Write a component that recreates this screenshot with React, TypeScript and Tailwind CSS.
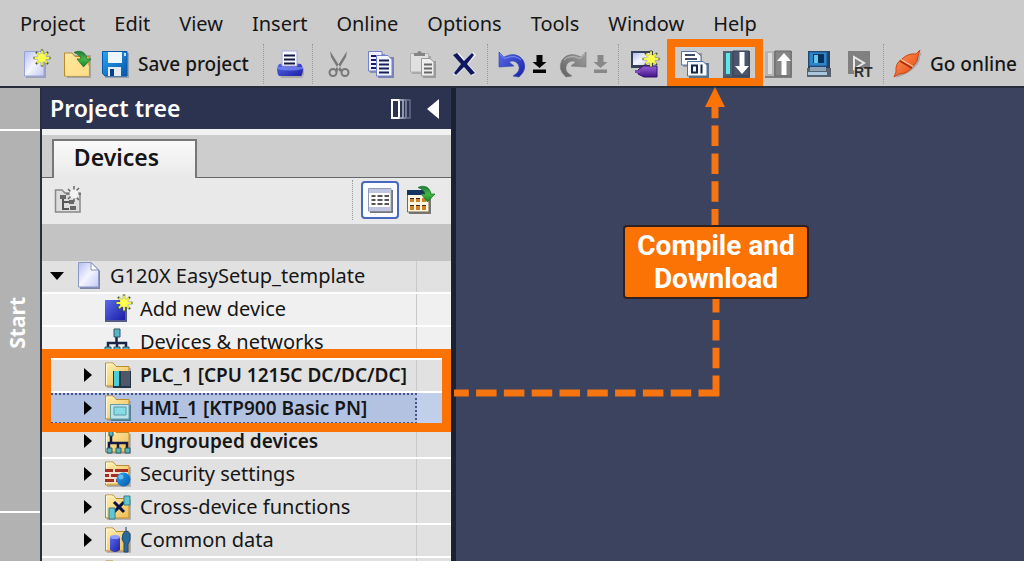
import type { ReactNode } from "react";

type IconProps = { children: ReactNode };

function Icon({ children }: IconProps) {
  return (
    <svg viewBox="0 0 28 28" className="block h-7 w-7 shrink-0 overflow-visible" aria-hidden="true">
      {children}
    </svg>
  );
}

function Defs() {
  return (
    <svg className="absolute h-0 w-0" aria-hidden="true">
      <defs>
        <linearGradient id="page" x1="0" y1="0" x2="1" y2="1">
          <stop offset="0" stopColor="#b4bdf0" />
          <stop offset="0.5" stopColor="#f4f5ff" />
          <stop offset="1" stopColor="#c3c9f2" />
        </linearGradient>
        <linearGradient id="folder" x1="0" y1="0" x2="1" y2="1">
          <stop offset="0" stopColor="#fff0ae" />
          <stop offset="1" stopColor="#efbd55" />
        </linearGradient>
        <linearGradient id="blue" x1="0" y1="0" x2="1" y2="1">
          <stop offset="0" stopColor="#5a6bec" />
          <stop offset="1" stopColor="#1b1fa4" />
        </linearGradient>
        <linearGradient id="sky" x1="0" y1="0" x2="1" y2="1">
          <stop offset="0" stopColor="#29a5f5" />
          <stop offset="1" stopColor="#0757a8" />
        </linearGradient>
        <linearGradient id="green" x1="0" y1="0" x2="0" y2="1">
          <stop offset="0" stopColor="#1f7d35" />
          <stop offset="0.5" stopColor="#46b64a" />
          <stop offset="1" stopColor="#178025" />
        </linearGradient>
        <linearGradient id="orange" x1="0" y1="0" x2="1" y2="1">
          <stop offset="0" stopColor="#ff9a62" />
          <stop offset="1" stopColor="#e2420a" />
        </linearGradient>
        <linearGradient id="violet" x1="0" y1="0" x2="0" y2="1">
          <stop offset="0" stopColor="#9a62dc" />
          <stop offset="1" stopColor="#431288" />
        </linearGradient>
        <linearGradient id="grey" x1="0" y1="0" x2="1" y2="1">
          <stop offset="0" stopColor="#a0a0a0" />
          <stop offset="1" stopColor="#606060" />
        </linearGradient>
      </defs>
    </svg>
  );
}

function Spark({ x, y }: { x: number; y: number }) {
  return (
    <g transform={`translate(${x} ${y})`}>
      <path
        d="M0-8.5V8.5M-8.5 0H8.5M-6-6L6 6M6-6L-6 6"
        stroke="#3f5a25"
        strokeWidth="2.4"
      />
      <path d="M0-7.500V7.500M-7.500 0H7.500M-5-5L5 5M5-5L-5 5" stroke="#f8f24a" strokeWidth="1.8" />
      <circle r="4" fill="#ffff50" />
    </g>
  );
}

function GreenArrow({ x, y }: { x: number; y: number }) {
  return (
    <path
      transform={`translate(${x} ${y})`}
      d="M0 1.5C6-1.5 12 1 13 8H17L9.5 16L3 8H7C6.500 5 4 3 0 1.500Z"
      fill="url(#green)"
      stroke="#176b25"
      strokeWidth="0.7"
    />
  );
}

function Folder() {
  return (
    <>
      <path d="M3 4H10L13 7H27V27H3Z" fill="#8e8e96" opacity="0.55" />
      <path d="M1.500 25V2H9L12 5.500H25V25Z" fill="url(#folder)" stroke="#bd8b2c" />
      <path d="M2.500 24V3H8.500L11.500 6.500" fill="none" stroke="#fff8d8" />
    </>
  );
}

const NewIcon = () => (
  <Icon>
    <path d="M3 3H23V28H3Z" fill="#8790b4" opacity="0.7" />
    <path d="M1.500 1.500H21V26H1.500Z" fill="url(#page)" stroke="#99a3d8" />
    <Spark x={19} y={8} />
  </Icon>
);
const OpenIcon = () => (
  <Icon>
    <path d="M4 5H28V28H4Z" fill="#808080" opacity="0.5" />
    <path d="M1.500 26V3H9L12 6.500H26V26Z" fill="url(#folder)" stroke="#bd8b2c" />
    <path d="M8 9H18L26 16V26H3V12Z" fill="#ffe596" opacity="0.8" />
    <GreenArrow x={11} y={1} />
  </Icon>
);
const SaveIcon = () => (
  <Icon>
    <path d="M0 3H26V28H2Z" fill="#78869b" opacity="0.6" />
    <path d="M-.5 1.500H24V26H2L-.5 23.500Z" fill="url(#sky)" stroke="#0658ae" />
    <path d="M5 2H19V13H5Z" fill="#eef7ff" />
    <path d="M5 17H18V26H5Z" fill="#e3ebf5" />
    <path d="M7 19H11V26H7Z" fill="#0b3e82" />
    <path d="M21 3H23V6H21Z" fill="#bfe5ff" />
  </Icon>
);
const PrintIcon = () => (
  <Icon>
    <path d="M3 18H28V25L26 28H5Z" fill="#777" opacity="0.4" />
    <path d="M3 14Q14 12 25 14L27 18Q27 24 25 26H3Q1 24 1 18Z" fill="url(#blue)" />
    <path d="M6 1H21V16H6Z" fill="#f7f7ff" stroke="#a5aadb" />
    <path d="M8 5.500H19M8 9.500H19M8 13.500H19" stroke="#121840" strokeWidth="2" />
    <path d="M1 17H27V19Q14 22 1 19Z" fill="#7b8af6" opacity="0.75" />
  </Icon>
);
const CutIcon = () => (
  <Icon>
    <path d="M5 1L17 20L15 22L6 7ZM22 1L10 20L12 22L21 7Z" fill="#777" />
    <circle cx="8" cy="22.500" r="3.500" fill="none" stroke="#777" strokeWidth="2" />
    <circle cx="20" cy="22.500" r="3.500" fill="none" stroke="#777" strokeWidth="2" />
  </Icon>
);
const CopyIcon = () => (
  <Icon>
    <path d="M3 4H18V23H3Z" fill="#8990b0" />
    <path d="M1.500 1.500H15V21H1.500Z" fill="#f0f2ff" stroke="#7180d0" />
    <path d="M4 6H9M4 10H9M4 14H9M4 18H9" stroke="#17205d" strokeWidth="1.800" />
    <path d="M11 7H27V28H11Z" fill="#7a83b0" />
    <path d="M9.500 5.500H21L25 9.500V26H9.500Z" fill="#f5f6ff" stroke="#7180d0" />
    <path d="M12 10.500H22M12 14.500H22M12 18.500H22M12 22.500H22" stroke="#17205d" strokeWidth="2" />
  </Icon>
);
const PasteIcon = () => (
  <Icon>
    <path d="M3 6H22V24H3Z" fill="#a8a8a8" />
    <path d="M1.500 3.500H19.500V22H1.500Z" fill="#e0e0e0" stroke="#b0b0b0" />
    <path d="M5 3H8Q10.500-1 13 3H16V6H5Z" fill="#858585" />
    <path d="M14 11H27V28H14Z" fill="#9a9a9a" />
    <path d="M12.500 8.500H21L25 12V26H12.500Z" fill="#eee" stroke="#999" />
    <path d="M15 14.500H23M15 18.500H23M15 22.500H23" stroke="#666" strokeWidth="1.800" />
  </Icon>
);
const DeleteIcon = () => (
  <Icon>
    <path d="M3 4L8 3L14 10L22 2L25 5L17 14L25 23L21 26L13 18L5 26L2 24L10 14Z" fill="#f2f3ff" />
    <path d="M2 5L6 3L13 11L21 3L23 5L16 14L24 23L20 25L13 17L5 25L3 23L10 14Z" fill="#10165f" />
  </Icon>
);
function ArcArrow({ redo = false }: { redo?: boolean }) {
  return (
    <Icon>
      <g transform={redo ? "translate(28 0) scale(-1 1)" : undefined}>
        <path
          d="M1 2L6 7Q18 1 25 10Q30 19 21 27L15 26Q24 21 20 14Q16 9 11 12L16 16L1 17Z"
          fill={redo ? "url(#grey)" : "url(#blue)"}
          stroke={redo ? "#777" : "#2745b6"}
          strokeWidth="0.6"
        />
        <path d="M2 4L7 8.500Q17 4 23 10" stroke={redo ? "#bbb" : "#7893fa"} fill="none" />
      </g>
    </Icon>
  );
}
const DropIcon = ({ muted = false }: { muted?: boolean }) => (
  <svg viewBox="0 0 16 28" className="block h-7 w-4" aria-hidden="true">
    <path d="M5.500 5H11.500V12H15.500L8.500 18L1.500 12H5.500ZM2 19.500H15V23H2Z" fill={muted ? "#888" : "#050505"} />
  </svg>
);
const DeviceIcon = () => (
  <Icon>
    <path d="M0 1H22V18H0Z" fill="#35405c" />
    <path d="M2 3H20V15H2Z" fill="url(#page)" />
    <path d="M7 20L12 16H26V27H13L7 24Z" fill="url(#violet)" stroke="#34106c" />
    <path d="M4 20H9V23H4Z" fill="#7c48bd" />
    <Spark x={20} y={9} />
  </Icon>
);
const CompileIcon = () => (
  <Icon>
    <path d="M2 3H21V17H2Z" fill="#777" opacity="0.6" />
    <path d="M.5 1.500H15L20 6V15H.5Z" fill="#fff" stroke="#5775a2" />
    <path d="M4 5H14M4 9H16" stroke="#3d4c68" strokeWidth="2" />
    <path d="M8 13H28V28H8Z" fill="#58718f" />
    <path d="M6.500 11.500H22L26 15V26H6.500Z" fill="#f4faff" stroke="#527295" />
    <rect x="11" y="15.500" width="5" height="7" fill="none" stroke="#152642" strokeWidth="2" />
    <path d="M20.500 14.500V23.500" stroke="#152642" strokeWidth="2" />
  </Icon>
);
const TransferIcon = ({ up = false }: { up?: boolean }) => (
  <Icon>
    <path d="M0 1H27V28H0Z" fill={up ? "#808080" : "#4a5468"} />
    <path d="M0 1H9V26H0Z" fill={up ? "#b5b5b5" : "#4d6475"} />
    <path d="M3 3H7V24H3Z" fill={up ? "#ddd" : "#5fe6ea"} />
    <path d="M10 1H26V26H10Z" fill={up ? "#868686" : "#4b566c"} stroke={up ? "#6b6b6b" : "#354157"} />
    <path
      d={up ? "M19 3L26 11H21.500V25H16.500V11H12Z" : "M16.500 2H21.500V16H26L19 24L12 16H16.500Z"}
      fill="#fff"
    />
  </Icon>
);
const PcIcon = () => (
  <Icon>
    <path d="M1 1H23V18H1Z" fill="#26415f" />
    <path d="M2 2H20V16H2Z" fill="#2f86c8" stroke="#1b5390" />
    <path d="M6 4H17V13H6Z" fill="#06305f" />
    <path d="M7 5H11V13H7Z" fill="#63c9e6" />
    <path d="M0 18H24V27H0Z" fill="#56626f" />
    <path d="M3 17H19V21H3Z" fill="#8ea4b8" />
    <path d="M1 22H20V25H1Z" fill="#a9c6dc" />
  </Icon>
);
const RuntimeIcon = () => (
  <Icon>
    <path d="M-1 1H21V18H5V24H-1Z" fill="#808080" />
    <path d="M5 7V19L15 13Z" fill="none" stroke="#e8e8e8" strokeWidth="2" />
    <text x="5" y="27" className="font-['Liberation_Sans'] text-[14px] font-bold" fill="#303030">RT</text>
  </Icon>
);
const PlugIcon = () => (
  <Icon>
    <path d="M2 28L4 24Q3 15 10 11L18 6L24 5L28 2L26 7Q26 12 21 17Q16 23 7 26Z" fill="#777" opacity="0.45" />
    <path d="M0 27L2 22Q1 13 8 9Q14 3 22 4L26 0L24 6Q24 12 19 16Q14 24 5 24Z" fill="url(#orange)" stroke="#cf4510" />
    <path d="M6 11L18 18" stroke="#a82b05" strokeWidth="1.500" />
    <path d="M7 9.500L19 16.500" stroke="#ffc09a" strokeWidth="1.200" />
  </Icon>
);

const ProjectIcon = () => (
  <Icon>
    <path d="M2 2H15L22 9V27H2Z" fill="#7a85a8" />
    <path d="M.5 .500H13L20.500 8V25H.5Z" fill="url(#page)" stroke="#8d98c5" />
    <path d="M13 .500V8H20.500Z" fill="#fff" stroke="#8290bd" />
  </Icon>
);
const AddIcon = () => (
  <Icon>
    <path d="M1 6H23V27H1Z" fill="#555c89" />
    <path d="M1 5H21V25H1Z" fill="url(#blue)" />
    <Spark x={20} y={8} />
  </Icon>
);
const NetworkIcon = () => (
  <Icon>
    <path d="M12.500 9V15M4 20V15H22V20M13 15V20" fill="none" stroke="#1a2448" strokeWidth="2.500" />
    <path d="M10 1H16V9H10ZM1 19H7V26H1ZM10 19H16V26H10ZM19 19H25V26H19Z" fill="#58b5c5" stroke="#31566b" />
  </Icon>
);
const PlcIcon = () => (
  <Icon>
    <Folder />
    <path d="M9 10H27V27H9Z" fill="#263447" />
    <path d="M10 10H15V25H10Z" fill="#4cd0d8" />
    <path d="M17 10H26V25H17Z" fill="#4e5867" />
  </Icon>
);
const HmiIcon = () => (
  <Icon>
    <Folder />
    <path d="M7 11H27V27H7Z" fill="#557e91" />
    <path d="M6.500 10.500H25V25H6.500Z" fill="#bfe1e8" stroke="#629dad" />
    <path d="M10 13H22V21H10Z" fill="#88dce5" stroke="#5599aa" />
  </Icon>
);
const UngroupedIcon = () => (
  <Icon>
    <Folder />
    <path d="M7 7V16M5 21V16H23V21M14 16V21" stroke="#121a47" strokeWidth="2.500" fill="none" />
    <path d="M5 3H9V9H5ZM3 21H8V26H3ZM12 21H17V26H12ZM21 21H26V26H21Z" fill="#59b5bd" stroke="#285b65" />
  </Icon>
);
const SecurityIcon = () => (
  <Icon>
    <Folder />
    <path d="M1 9H24V23H1Z" fill="#f5e1d0" />
    <path d="M1 9H9V12H1ZM11 9H24V12H11ZM1 14H5V17H1ZM7 14H17V17H7ZM1 19H10V22H1ZM12 19H20V22H12Z" fill="#a42d20" />
    <circle cx="19.500" cy="19.500" r="7" fill="url(#sky)" />
    <circle cx="17" cy="17" r="2.500" fill="#7dd5ff" opacity="0.7" />
  </Icon>
);
const CrossIcon = () => (
  <Icon>
    <Folder />
    <path d="M10 9L20 19M20 9L10 19" stroke="#0c1344" strokeWidth="3" />
    <path d="M20 3H26V12H20ZM5 15H11V26H5Z" fill="#61c6d0" stroke="#327e8e" />
  </Icon>
);
const CommonIcon = () => (
  <Icon>
    <Folder />
    <path d="M6 11V24Q11 28 16 24V11Z" fill="url(#blue)" />
    <ellipse cx="11" cy="11" rx="5" ry="2" fill="#8f9cff" />
    <path d="M22 1V5M19 8Q22 2 26 8V14L24 18V26H20V17L18 13Z" fill="#286a9a" stroke="#1a4774" />
  </Icon>
);

const MENU = ["Project", "Edit", "View", "Insert", "Online", "Options", "Tools", "Window", "Help"];

function Tool({ label, children }: { label: string; children: ReactNode }) {
  return (
    <button type="button" aria-label={label} className="block shrink-0">
      {children}
    </button>
  );
}

const Separator = () => <span className="h-10 w-px shrink-0 border-l border-dotted border-[#999]" />;

function Toolbar() {
  return (
    <div className="flex h-10 items-center pl-[23px] text-[19px] font-medium whitespace-nowrap">
      <div className="flex items-center gap-3">
        <Tool label="New project"><NewIcon /></Tool>
        <Tool label="Open project"><OpenIcon /></Tool>
        <button type="button" className="flex w-40 items-center gap-[7px]">
          <SaveIcon />
          <span>Save project</span>
        </button>
      </div>
      <div className="flex items-center">
        <Separator />
        <span className="mr-2 ml-3"><Tool label="Print"><PrintIcon /></Tool></span>
        <Separator />
      </div>
      <div className="mr-2 ml-3 flex items-center gap-3.5">
        <Tool label="Cut"><CutIcon /></Tool>
        <Tool label="Copy"><CopyIcon /></Tool>
        <Tool label="Paste"><PasteIcon /></Tool>
        <Tool label="Delete"><DeleteIcon /></Tool>
      </div>
      <div className="flex items-center">
        <Separator />
        <div className="ml-2.5 flex items-center gap-[5px]">
          <Tool label="Undo"><ArcArrow /></Tool>
          <Tool label="Undo history"><DropIcon /></Tool>
        </div>
        <div className="mr-2.5 ml-3 flex items-center gap-[5px]">
          <Tool label="Redo"><ArcArrow redo /></Tool>
          <Tool label="Redo history"><DropIcon muted /></Tool>
        </div>
        <Separator />
      </div>
      <div className="mr-1.5 ml-3 flex items-center gap-[22px]">
        <Tool label="Add device"><DeviceIcon /></Tool>
        <div className="flex items-center gap-3.5">
          <div className="relative flex gap-3.5">
            <Tool label="Compile"><CompileIcon /></Tool>
            <Tool label="Download to device"><TransferIcon /></Tool>
            <span className="pointer-events-none absolute -top-[11px] -right-3 -bottom-2 -left-3.5 border-8 border-[#fb7305]" />
          </div>
          <Tool label="Upload from device"><TransferIcon up /></Tool>
          <Tool label="Start simulation"><PcIcon /></Tool>
          <Tool label="Start runtime"><RuntimeIcon /></Tool>
        </div>
      </div>
      <div className="flex items-center gap-2.5">
        <Separator />
        <button type="button" className="flex items-center gap-2">
          <PlugIcon />
          <span>Go online</span>
        </button>
      </div>
    </div>
  );
}

type Row = { label: string; icon: ReactNode; bold?: boolean; light?: boolean; leaf?: boolean; root?: boolean; selected?: boolean };

const TOP_ROWS: Row[] = [
  { label: "G120X EasySetup_template", icon: <ProjectIcon />, root: true },
  { label: "Add new device", icon: <AddIcon />, leaf: true, light: true },
  { label: "Devices & networks", icon: <NetworkIcon />, leaf: true, light: true },
];
const DEVICE_ROWS: Row[] = [
  { label: "PLC_1 [CPU 1215C DC/DC/DC]", icon: <PlcIcon />, bold: true },
  { label: "HMI_1 [KTP900 Basic PN]", icon: <HmiIcon />, bold: true, selected: true },
];
const BOTTOM_ROWS: Row[] = [
  { label: "Ungrouped devices", icon: <UngroupedIcon />, bold: true },
  { label: "Security settings", icon: <SecurityIcon /> },
  { label: "Cross-device functions", icon: <CrossIcon /> },
  { label: "Common data", icon: <CommonIcon /> },
  { label: "", icon: <Icon><Folder /></Icon>, leaf: true },
];

function TreeRow({ row }: { row: Row }) {
  const bg = row.selected ? "bg-[#c2cfeb]" : row.light ? "bg-[#f0f0f0]" : "bg-[#e1e1e1]";
  const cell = row.selected
    ? "border-y-2 border-r-2 border-dotted border-[#46568c] bg-[#b3c2e1]"
    : "border-r border-[#c9c9c9]";
  return (
    <li role="treeitem" aria-selected={!!row.selected} className={`flex h-[33px] border-b-2 border-white ${bg}`}>
      <div className={`flex w-[375px] shrink-0 items-center pb-px ${row.root ? "pl-2" : "pl-[38px]"} ${cell}`}>
        <span className={row.root ? "w-7 shrink-0" : "w-6 shrink-0"}>
          {row.root ? (
            <svg viewBox="0 0 14 8" className="h-2 w-3.5" aria-hidden="true"><path d="M0 0H14L7 8Z" /></svg>
          ) : row.leaf ? null : (
            <svg viewBox="0 0 8 14" className="ml-1 h-3.5 w-2" aria-hidden="true"><path d="M0 0L8 7L0 14Z" /></svg>
          )}
        </span>
        {row.icon}
        <span className={`whitespace-nowrap leading-7 ${row.root ? "ml-1" : "ml-2"} ${row.bold ? "text-[19px] font-semibold" : "text-[20px]"}`}>
          {row.label}
        </span>
      </div>
    </li>
  );
}

function ProjectTree() {
  return (
    <aside className="flex w-[409px] shrink-0 flex-col overflow-hidden bg-[#c3c3c3]">
      <header className="flex h-[41px] shrink-0 items-center bg-[#2b3350] pr-3 pl-2 text-white">
        <h2 className="flex-1 text-[23px] font-semibold">Project tree</h2>
        <button type="button" aria-label="Toggle columns" className="mr-4">
          <svg viewBox="0 0 20 20" className="h-5 w-5" fill="none" aria-hidden="true">
            <path d="M1 1H8V19H1Z" stroke="#fff" strokeWidth="2" />
            <path d="M8 1H12V19H8" stroke="#b5bac9" strokeWidth="1.500" />
            <path d="M12 1H15V19H12" stroke="#8c93a9" strokeWidth="1.500" />
            <path d="M15 1H19V19H15" stroke="#656e89" strokeWidth="1.500" />
          </svg>
        </button>
        <button type="button" aria-label="Collapse">
          <svg viewBox="0 0 12 20" className="h-5 w-3" aria-hidden="true"><path d="M12 0V20L0 10Z" fill="#fff" /></svg>
        </button>
      </header>
      <div className="flex shrink-0 border-t-[6px] border-[#f2f2f2] bg-[#cdcdcd]" role="tablist">
        <span className="w-2.5 border-b border-[#666]" />
        <button
          type="button"
          role="tab"
          aria-selected="true"
          className="mt-1 flex h-[39px] w-[145px] justify-center border-x-2 border-t-2 border-[#777] bg-linear-to-b from-[#fafafa] to-[#e9e9e9] pr-4 text-[23px] leading-8 font-semibold"
        >
          Devices
        </button>
        <span className="flex-1 border-b border-[#666]" />
      </div>
      <div className="flex h-[46px] shrink-0 items-center bg-[#e9e9e9] pr-3 pb-0.5 pl-3">
        <Tool label="New group">
          <Icon>
            <path d="M1.500 26V4H8L11 7H26V26Z" fill="#ddd" stroke="#888" strokeWidth="1.500" />
            <path d="M9 10V23H15M9 16H15" fill="none" stroke="#555" strokeWidth="2" />
            <path d="M6 9H12V13H6ZM15 14H20V18H15ZM16 20H22V24H16Z" fill="#666" />
            <path d="M20 0V16M12 8H27M14 3L25 14M25 2L14 13" stroke="#666" strokeWidth="1.500" />
            <circle cx="20" cy="8" r="4.500" fill="#f3f3f3" />
          </Icon>
        </Tool>
        <span className="flex-1" />
        <Separator />
        <button type="button" aria-label="Details view" className="ml-2 flex h-[38px] w-[38px] items-center justify-center rounded border-2 border-[#4668bd] bg-[#fafbff]">
          <Icon>
            <path d="M4 4H27V27H4Z" fill="#777" />
            <path d="M2.500 2.500H25V25H2.500Z" fill="#fff" stroke="#9299bb" />
            <path d="M3 3H25V7H3ZM3 21H25V25H3Z" fill="#c0c6df" />
            <path d="M5.500 10H9.500M11.500 10H16.500M18.500 10H23M5.500 14H9.500M11.500 14H16.500M18.500 14H23M5.500 18H9.500M11.500 18H16.500M18.500 18H23" stroke="#555" strokeWidth="2" />
          </Icon>
        </button>
        <span className="mr-1 ml-2">
          <Tool label="Show overview">
            <Icon>
              <path d="M2 6H24V28H2Z" fill="#777" />
              <path d="M.5 4.500H22V26H.5Z" fill="#fff6df" stroke="#746954" />
              <path d="M0 4H22V9H0Z" fill="#12365f" />
              <path d="M3 12H7V16H3ZM9 12H13V16H9ZM15 12H19V16H15ZM3 19H7V24H3ZM9 19H13V24H9ZM15 19H19V24H15Z" fill="#cf812a" />
              <path d="M3 12H7V13H3ZM9 12H13V13H9ZM3 19H7V20H3ZM9 19H13V20H9ZM15 19H19V20H15Z" fill="#40271a" />
              <GreenArrow x={11} y={0} />
            </Icon>
          </Tool>
        </span>
      </div>
      <ul role="tree" aria-label="Project tree" className="mt-[37px]">
        {TOP_ROWS.map((row) => <TreeRow key={row.label} row={row} />)}
        <li role="none" className="relative">
          <ul role="group">
            {DEVICE_ROWS.map((row) => <TreeRow key={row.label} row={row} />)}
          </ul>
          <span className="pointer-events-none absolute inset-x-0 -top-[11px] -bottom-1.5 z-10 border-[9px] border-[#fb7305]" />
        </li>
        {BOTTOM_ROWS.map((row) => <TreeRow key={row.label} row={row} />)}
      </ul>
    </aside>
  );
}

function Workspace() {
  return (
    <main className="relative min-w-0 flex-1 bg-[#3b435e]">
      <svg className="absolute top-0 left-0 h-full w-full overflow-visible" aria-hidden="true">
        <g stroke="#f77510" strokeWidth="7" strokeDasharray="20.5 7.3" fill="none">
          <path d="M263 305H-2" />
          <path d="M260 308V208" />
          <path d="M259 137V18" strokeDashoffset="4.500" />
        </g>
        <path d="M259-1L269 19H249Z" fill="#fb7305" />
      </svg>
      <p className="absolute top-[137px] left-[167px] w-[186px] rounded border-2 border-[#30201f] bg-[#fb7305] pt-0.5 pb-0.5 text-center font-[Roboto,sans-serif] text-[28px] leading-[33px] font-bold text-white">
        Compile and Download
      </p>
    </main>
  );
}

export default function App() {
  return (
    <div className="flex h-screen flex-col overflow-hidden bg-[#cbcbcb] font-['Noto_Sans','Open_Sans',sans-serif] text-[#161616]">
      <Defs />
      <header className="shrink-0 border-b-2 border-[#282d3b] pb-0.5">
        <nav className="flex h-11 items-center gap-[29px] pt-1 pl-5 text-[20px]" aria-label="Main menu">
          {MENU.map((item) => (
            <button type="button" key={item}>{item}</button>
          ))}
        </nav>
        <Toolbar />
      </header>
      <div className="flex min-h-0 flex-1">
        <nav className="flex w-10 shrink-0 flex-col bg-[#b2b2b2]" aria-label="Views">
          <span className="h-[43px] shrink-0 border-b-2 border-white" />
          <button type="button" className="flex h-[382px] shrink-0 items-center justify-center border-b-2 border-white pt-1 pr-1 text-[21px] font-bold text-white">
            <span className="rotate-180 [writing-mode:vertical-rl]">Start</span>
          </button>
        </nav>
        <span className="w-0.5 shrink-0 bg-[#282e40]" />
        <ProjectTree />
        <span className="w-[5px] shrink-0 bg-[#1b2135]" />
        <Workspace />
      </div>
    </div>
  );
}
